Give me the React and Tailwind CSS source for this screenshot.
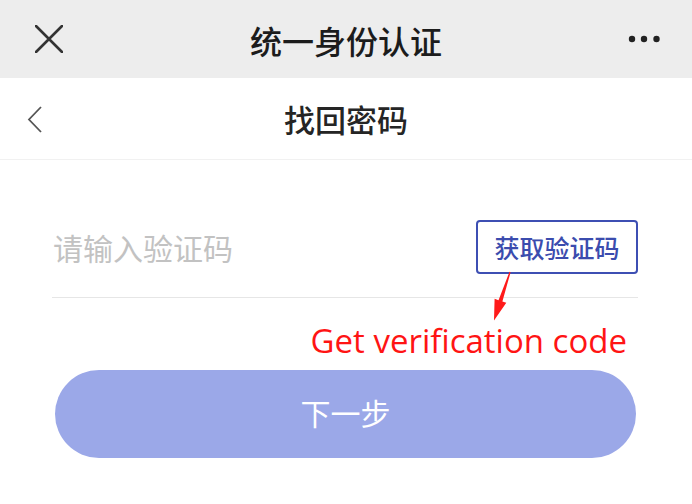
import React from 'react';

const cjk = "font-['Noto_Sans_CJK_SC',sans-serif]";

const CloseIcon = () => (
  <svg width="28" height="28" viewBox="0 0 28 28" className="block">
    <path d="M1 1 L27 27 M27 1 L1 27" stroke="#333" strokeWidth="2.6" strokeLinecap="round" fill="none" />
  </svg>
);

const MoreIcon = () => (
  <svg width="32" height="8" viewBox="0 0 32 8" className="block">
    <circle cx="4" cy="4" r="3.2" fill="#222" />
    <circle cx="16" cy="4" r="3.2" fill="#222" />
    <circle cx="28.5" cy="4" r="3.2" fill="#222" />
  </svg>
);

const BackIcon = () => (
  <svg width="16" height="28" viewBox="0 0 16 28" className="block">
    <path d="M14 1 L2 13.5 L14 26" stroke="#555" strokeWidth="1.8" fill="none" />
  </svg>
);

const App = () => {
  return (
    <div className={`relative w-[692px] h-[504px] bg-white overflow-hidden ${cjk}`}>
      {/* top bar */}
      <div className="h-[78px] bg-[#ededed] grid grid-cols-[1fr_auto_1fr] items-center">
        <div className="pl-[35px]">
          <CloseIcon />
        </div>
        <div className="text-[32px] font-medium text-[#1c1c1c] leading-none pt-[1px]">统一身份认证</div>
        <div className="flex justify-end pr-[32px]">
          <MoreIcon />
        </div>
      </div>

      {/* page header */}
      <div className="h-[82px] border-b border-[#f1f1f1] grid grid-cols-[1fr_auto_1fr] items-center">
        <div className="pl-[27px] pt-[3px]">
          <BackIcon />
        </div>
        <div className="text-[31px] font-medium text-[#252525] leading-none">找回密码</div>
        <div />
      </div>

      {/* form */}
      <div className="pl-[52px] pr-[54px]">
        <div className="flex items-center justify-between pt-[60px] pb-[23px] border-b border-[#e6e6e6]">
          <span className="text-[30px] text-[#c2c2c2] leading-none pl-[1px]">请输入验证码</span>
          <button className="h-[54px] w-[162px] border-2 border-[#3d4fb3] rounded-[4px] text-[25px] text-[#3b4cae] font-medium leading-none">
            获取验证码
          </button>
        </div>

        <div className="h-[72px] pt-[12px] flex items-center justify-end pr-[11px]">
          <span className="font-['Open_Sans',sans-serif] text-[33px] text-[#ff1414] leading-none">
            Get verification code
          </span>
        </div>

        <button className="mx-[3px] w-[581px] h-[88px] rounded-full bg-[#9ba8e8] text-white text-[30px] leading-none pb-[4px]">
          下一步
        </button>
      </div>

      {/* annotation arrow */}
      <svg className="absolute left-[485px] top-[268px]" width="30" height="56" viewBox="0 0 30 56">
        <polygon
          points="24.5,3.8 25.6,4.2 17.4,33.4 21.3,34.8 9,52.5 9.6,30.8 13.5,32.2"
          fill="#ff1a1a"
        />
      </svg>
    </div>
  );
};

export default App;
